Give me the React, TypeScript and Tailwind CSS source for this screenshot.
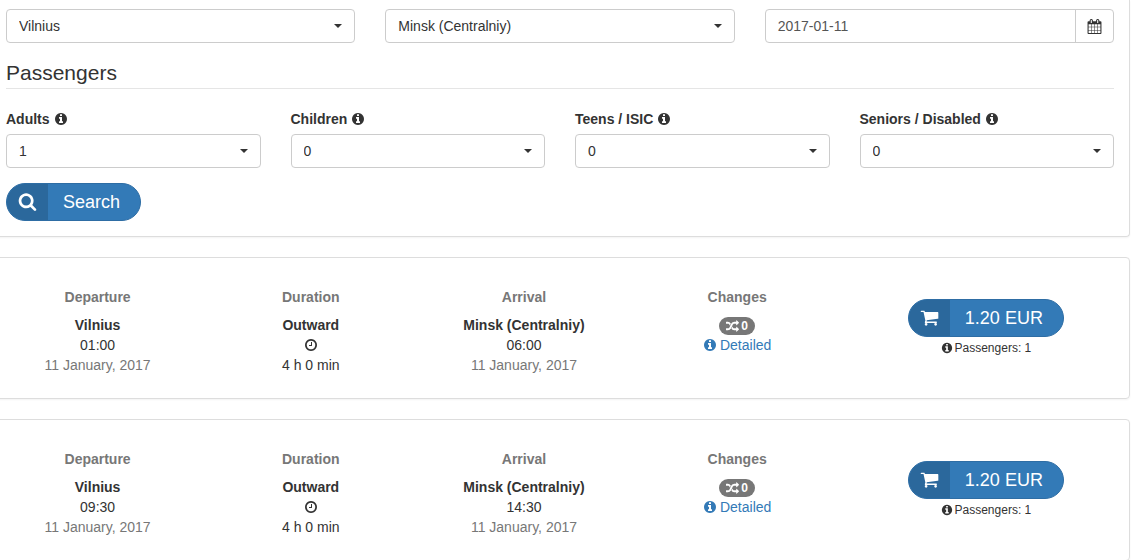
import React, { useState } from "react";
import clsx from "clsx";

const ICONS = {
  calendar:
    "M192 1664h288v-288h-288v288zm352 0h320v-288h-320v288zm-352-352h288v-320h-288v320zm352 0h320v-320h-320v320zm-352-384h288v-288h-288v288zm736 736h320v-288h-320v288zm-384-736h320v-288h-320v288zm768 736h288v-288h-288v288zm-384-352h320v-320h-320v320zm-352-864v-288q0-13-9.5-22.5t-22.5-9.5h-64q-13 0-22.5 9.5t-9.5 22.5v288q0 13 9.5 22.5t22.5 9.5h64q13 0 22.5-9.5t9.5-22.5zm736 864h288v-320h-288v320zm-384-384h320v-288h-320v288zm384 0h288v-288h-288v288zm32-480v-288q0-13-9.5-22.5t-22.5-9.5h-64q-13 0-22.5 9.5t-9.5 22.5v288q0 13 9.5 22.5t22.5 9.5h64q13 0 22.5-9.5t9.5-22.5zm384-64v1280q0 52-38 90t-90 38h-1408q-52 0-90-38t-38-90v-1280q0-52 38-90t90-38h128v-96q0-66 47-113t113-47h64q66 0 113 47t47 113v96h384v-96q0-66 47-113t113-47h64q66 0 113 47t47 113v96h128q52 0 90 38t38 90z",
  info: "M1152 1376v-160q0-14-9-23t-23-9h-96v-512q0-14-9-23t-23-9h-320q-14 0-23 9t-9 23v160q0 14 9 23t23 9h96v320h-96q-14 0-23 9t-9 23v160q0 14 9 23t23 9h448q14 0 23-9t9-23zm-128-896v-160q0-14-9-23t-23-9h-192q-14 0-23 9t-9 23v160q0 14 9 23t23 9h192q14 0 23-9t9-23zm640 416q0 209-103 385.5t-279.5 279.5-385.5 103-385.5-103-279.5-279.5-103-385.5 103-385.5 279.5-279.5 385.5-103 385.5 103 279.5 279.5 103 385.5z",
  clock:
    "M1024 544v448q0 14-9 23t-23 9h-320q-14 0-23-9t-9-23v-64q0-14 9-23t23-9h224v-352q0-14 9-23t23-9h64q14 0 23 9t9 23zm416 352q0-148-73-273t-198-198-273-73-273 73-198 198-73 273 73 273 198 198 273 73 273-73 198-198 73-273zm224 0q0 209-103 385.5t-279.5 279.5-385.5 103-385.5-103-279.5-279.5-103-385.5 103-385.5 279.5-279.5 385.5-103 385.5 103 279.5 279.5 103 385.5z",
  search:
    "M1216 832q0-185-131.5-316.5t-316.5-131.5-316.5 131.5-131.5 316.5 131.5 316.5 316.5 131.5 316.5-131.5 131.5-316.5zm512 832q0 52-38 90t-90 38q-54 0-90-38l-343-342q-179 124-399 124-143 0-273.5-55.5t-225-150-150-225-55.5-273.5 55.5-273.5 150-225 225-150 273.5-55.5 273.5 55.5 225 150 150 225 55.5 273.5q0 220-124 399l343 343q37 37 37 90z",
  cart: "M704 1536q0 52-38 90t-90 38-90-38-38-90 38-90 90-38 90 38 38 90zm896 0q0 52-38 90t-90 38-90-38-38-90 38-90 90-38 90 38 38 90zm128-1088v512q0 24-16.5 42.5t-40.5 21.5l-1044 122q13 60 13 70 0 16-24 64h920q26 0 45 19t19 45-19 45-45 19h-1024q-26 0-45-19t-19-45q0-11 8-31.5t16-36 21.5-40 15.5-29.5l-177-823h-204q-26 0-45-19t-19-45 19-45 45-19h256q16 0 28.5 6.5t19.5 15.5 13 24.5 8 26 5.5 29.5 4.5 26h1201q26 0 45 19t19 45z",
  random:
    "M666 481q-60 92-137 273-22-45-37-72.5t-40.5-63.5-51-56.5-63-35-81.5-14.5h-224q-14 0-23-9t-9-23v-192q0-14 9-23t23-9h224q250 0 410 225zm1126 799q0 14-9 23l-320 320q-9 9-23 9-13 0-22.5-9.5t-9.5-22.5v-192q-32 0-85 .5t-81 1-73-1-71-5-64-10.5-63-18.5-58-28.5-59-40-55-53.5-56-69.5q59-93 136-273 22 45 37 72.5t40.5 63.5 51 56.5 63 35 81.5 14.5h256v-192q0-14 9-23t23-9q12 0 24 10l319 319q9 9 9 23zm0-896q0 14-9 23l-320 320q-9 9-23 9-13 0-22.5-9.5t-9.5-22.5v-192h-256q-48 0-87 15t-69 45-51 61.5-45 77.5q-32 62-78 171-29 66-49.5 111t-54 105-64 100-74 83-90 68.5-106.5 42-128 16.5h-224q-14 0-23-9t-9-23v-192q0-14 9-23t23-9h224q48 0 87-15t69-45 51-61.5 45-77.5q32-62 78-171 29-66 49.5-111t54-105 64-100 74-83 90-68.5 106.5-42 128-16.5h256v-192q0-14 9-23t23-9q12 0 24 10l319 319q9 9 9 23z",
};

const Icon = ({ name, className }: { name: keyof typeof ICONS; className?: string }) => (
  <svg viewBox="0 0 1792 1792" fill="currentColor" aria-hidden="true" className={clsx("shrink-0", className)}>
    <path d={ICONS[name]} />
  </svg>
);

interface SelectProps {
  id: string;
  label?: string;
  options: string[];
  initial: string;
}

const Select = ({ id, label, options, initial }: SelectProps) => {
  const [value, setValue] = useState(initial);

  return (
    <div className="relative">
      <select
        id={id}
        aria-label={label}
        value={value}
        onChange={(e) => setValue(e.target.value)}
        className="block h-[34px] w-full appearance-none rounded border border-[#ccc] bg-white px-3 text-sm text-[#333]"
      >
        {options.map((option) => (
          <option key={option} value={option}>{option}</option>
        ))}
      </select>
      <span className="pointer-events-none absolute top-[15px] right-[13px] border-x-4 border-t-4 border-x-transparent border-t-[#333]" />
    </div>
  );
};

interface PillButtonProps {
  icon: keyof typeof ICONS;
  type?: "button" | "submit";
  children: React.ReactNode;
}

const PillButton = ({ icon, type = "button", children }: PillButtonProps) => (
  <button
    type={type}
    className="inline-flex h-[38px] cursor-pointer items-stretch overflow-hidden rounded-full border border-[#2e6da4] bg-[#337ab7] text-lg text-white"
  >
    <span className="flex w-[41px] items-center justify-center bg-[#2b689c] pb-0.5">
      <Icon name={icon} className="size-[19px]" />
    </span>
    <span className="flex items-center pr-5 pl-[15px]">{children}</span>
  </button>
);

const CITIES = ["Vilnius", "Minsk (Centralniy)"];
const COUNTS = ["0", "1", "2", "3", "4", "5"];

const PASSENGERS = [
  { id: "adults", label: "Adults", initial: "1" },
  { id: "children", label: "Children", initial: "0" },
  { id: "teens", label: "Teens / ISIC", initial: "0" },
  { id: "seniors", label: "Seniors / Disabled", initial: "0" },
];

const SearchForm = () => {
  const [date, setDate] = useState("2017-01-11");

  return (
    <form
      onSubmit={(e) => e.preventDefault()}
      className="rounded-b border border-t-0 border-[#ddd] px-[15px] pt-[9px] pb-[15px] shadow-xs"
    >
      <div className="grid grid-cols-3 gap-[30px]">
        <Select id="from" label="From" options={CITIES} initial="Vilnius" />
        <Select id="to" label="To" options={CITIES} initial="Minsk (Centralniy)" />
        <div className="flex h-[34px] rounded border border-[#ccc]">
          <input
            type="text"
            aria-label="Date"
            value={date}
            onChange={(e) => setDate(e.target.value)}
            className="min-w-0 flex-1 rounded-l px-3 text-sm text-[#555]"
          />
          <button
            type="button"
            aria-label="Open calendar"
            className="flex w-[38px] items-center justify-center border-l border-[#ccc]"
          >
            <Icon name="calendar" className="size-[15px]" />
          </button>
        </div>
      </div>

      <fieldset className="mt-[15px]">
        <legend className="mb-5 w-full border-b border-[#e5e5e5] text-[21px] leading-[30px]">Passengers</legend>
        <div className="grid grid-cols-4 gap-[30px]">
          {PASSENGERS.map((p) => (
            <div key={p.id}>
              <label htmlFor={p.id} className="mb-[5px] flex items-center gap-1 font-bold">
                {p.label}
                <Icon name="info" className="size-[14px]" />
              </label>
              <Select id={p.id} options={COUNTS} initial={p.initial} />
            </div>
          ))}
        </div>
      </fieldset>

      <div className="mt-[15px] flex">
        <PillButton icon="search" type="submit">Search</PillButton>
      </div>
    </form>
  );
};

interface Trip {
  from: string;
  to: string;
  departure: string;
  arrival: string;
  date: string;
  duration: string;
  changes: number;
  price: string;
}

const TRIPS: Trip[] = [
  { from: "Vilnius", to: "Minsk (Centralniy)", departure: "01:00", arrival: "06:00", date: "11 January, 2017", duration: "4 h 0 min", changes: 0, price: "1.20 EUR" },
  { from: "Vilnius", to: "Minsk (Centralniy)", departure: "09:30", arrival: "14:30", date: "11 January, 2017", duration: "4 h 0 min", changes: 0, price: "1.20 EUR" },
];

const Column = ({ title, children }: { title: string; children: React.ReactNode }) => (
  <div className="flex flex-col items-center">
    <h3 className="mb-2 font-bold text-[#777]">{title}</h3>
    {children}
  </div>
);

const TripCard = ({ trip }: { trip: Trip }) => (
  <article className="grid grid-cols-[3fr_3fr_3fr_3fr_4fr] rounded border border-[#ddd] pt-[29px] pr-px pb-[23px] shadow-xs">
    <Column title="Departure">
      <strong>{trip.from}</strong>
      <span>{trip.departure}</span>
      <span className="text-[#777]">{trip.date}</span>
    </Column>
    <Column title="Duration">
      <strong>Outward</strong>
      <span className="flex h-5 items-center">
        <Icon name="clock" className="size-[14px]" />
      </span>
      <span>{trip.duration}</span>
    </Column>
    <Column title="Arrival">
      <strong>{trip.to}</strong>
      <span>{trip.arrival}</span>
      <span className="text-[#777]">{trip.date}</span>
    </Column>
    <Column title="Changes">
      <span className="mt-0.5 flex h-[18px] items-center gap-0.5 rounded-full bg-[#777] px-[7px] text-xs font-bold text-white">
        <Icon name="random" className="size-[13px]" />
        {trip.changes}
      </span>
      <a href="#details" className="flex items-center gap-[3px] text-[#337ab7]">
        <Icon name="info" className="size-[14px]" />
        Detailed
      </a>
    </Column>
    <div className="flex flex-col items-center pt-3">
      <PillButton icon="cart">{trip.price}</PillButton>
      <small className="mt-px flex items-center gap-0.5 text-xs leading-5">
        <Icon name="info" className="size-3" />
        Passengers: 1
      </small>
    </div>
  </article>
);

export default function App() {
  return (
    <div className="h-screen overflow-hidden bg-white font-['Liberation_Sans',Arial,sans-serif] text-sm leading-5 text-[#333]">
      {/* the container runs slightly past the left edge of the window */}
      <main className="mr-px -ml-2.5 flex flex-col gap-5">
        <SearchForm />
        {TRIPS.map((trip) => (
          <TripCard key={trip.departure} trip={trip} />
        ))}
      </main>
    </div>
  );
}
